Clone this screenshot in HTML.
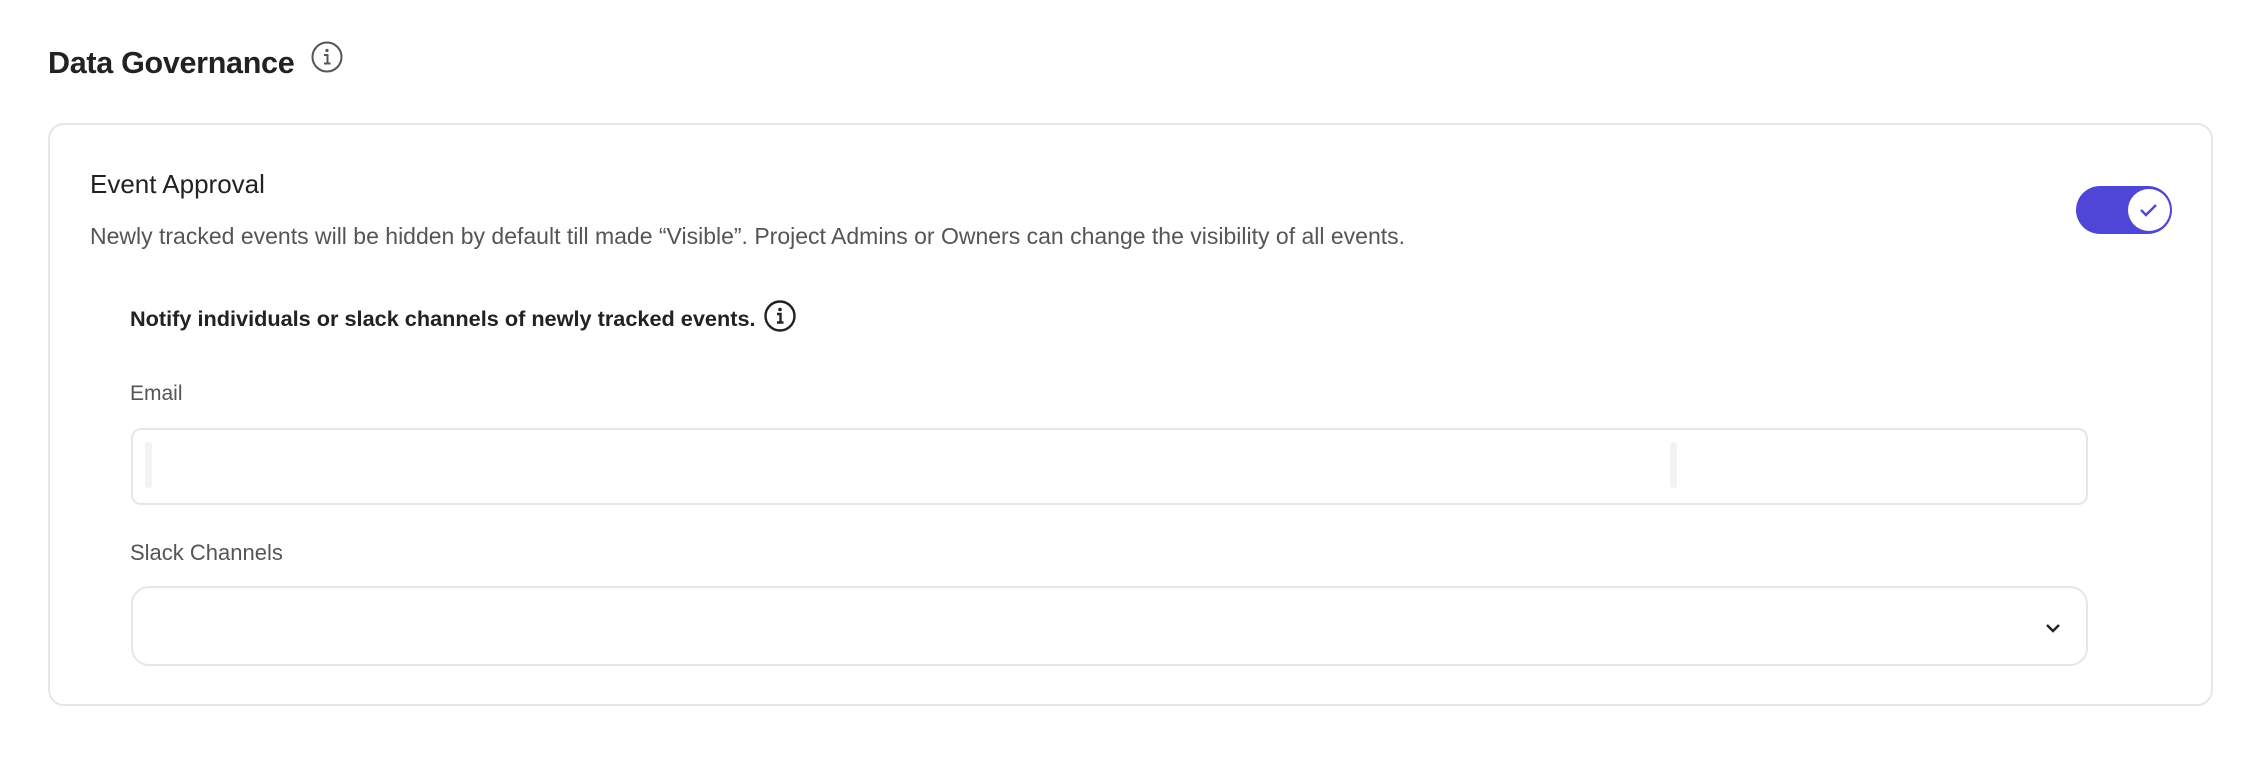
<!DOCTYPE html>
<html><head><style>
*{margin:0;padding:0;box-sizing:border-box}
body{width:2258px;height:760px;background:#fff;font-family:"Liberation Sans",sans-serif;position:relative;overflow:hidden;color:#222}
.a{position:absolute;white-space:nowrap}
h1{position:absolute;left:48px;top:46px;font-size:30.5px;font-weight:600;color:#222;letter-spacing:-0.3px}
.card{position:absolute;left:48px;top:123px;width:2165px;height:583px;border:2px solid #e6e6e6;border-radius:16px}
.inp{position:absolute;left:131px;width:1957px;border:2px solid #e6e6e6;background:#fff}
.bar{position:absolute;top:12px;width:7px;height:46px;background:#f3f3f3;border-radius:3px}
</style></head><body>
<h1>Data Governance</h1>
<svg class="a" style="left:311px;top:41px" width="32" height="32" viewBox="0 0 32 32"><circle cx="16" cy="16" r="14.5" fill="none" stroke="#555" stroke-width="2"/><circle cx="16" cy="9.5" r="1.6" fill="#555"/><path d="M13 14h3.5v8M13 22.5h6.5" fill="none" stroke="#555" stroke-width="2"/></svg>
<div class="card"></div>
<div class="a" style="left:90px;top:169px;font-size:26px;color:#222">Event Approval</div>
<div class="a" style="left:90px;top:223px;font-size:23px;color:#555">Newly tracked events will be hidden by default till made “Visible”. Project Admins or Owners can change the visibility of all events.</div>
<div class="a" style="left:2076px;top:186px;width:96px;height:48px;border-radius:24px;background:#4f46d8"></div>
<div class="a" style="left:2128px;top:189px;width:42px;height:42px;border-radius:50%;background:#fff"></div>
<svg class="a" style="left:2137px;top:198px" width="24" height="24" viewBox="0 0 24 24"><path d="M4 12l5 5 10-10" fill="none" stroke="#4f46d8" stroke-width="2.4"/></svg>
<div class="a" style="left:130px;top:306px;font-size:21.7px;font-weight:600;color:#222">Notify individuals or slack channels of newly tracked events.</div>
<svg class="a" style="left:764px;top:300px" width="32" height="32" viewBox="0 0 32 32"><circle cx="16" cy="16" r="14.5" fill="none" stroke="#222" stroke-width="2.4"/><circle cx="16" cy="9.5" r="1.8" fill="#222"/><path d="M13 14h3.5v8M13 22.5h6.5" fill="none" stroke="#222" stroke-width="2.4"/></svg>
<div class="a" style="left:130px;top:382px;font-size:21px;color:#555">Email</div>
<div class="inp" style="top:428px;height:77px;border-radius:10px"><div class="bar" style="left:12px"></div><div class="bar" style="left:1537px"></div></div>
<div class="a" style="left:130px;top:540px;font-size:22px;color:#555">Slack Channels</div>
<div class="inp" style="top:586px;height:80px;border-radius:18px"></div>
<svg class="a" style="left:2044px;top:619px" width="18" height="18" viewBox="0 0 18 18"><path d="M3 6l6 6 6-6" fill="none" stroke="#222" stroke-width="2.4"/></svg>
</body></html>
